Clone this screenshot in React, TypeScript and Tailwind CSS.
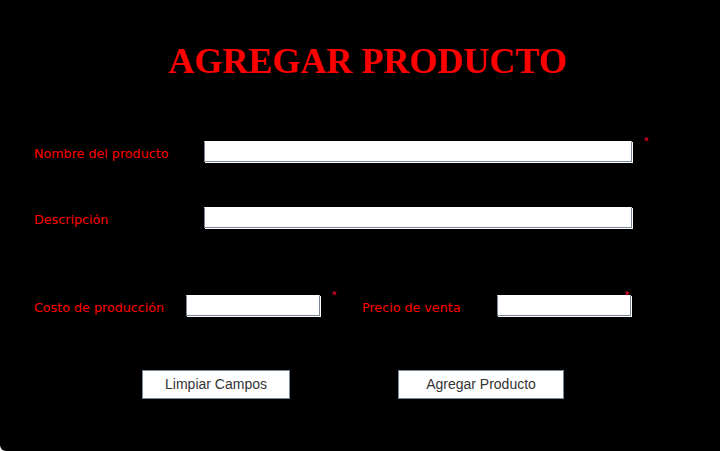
import React from 'react';

const Star = ({ className }: { className: string }) => (
  <span className={`absolute text-[11px] leading-[11px] font-bold text-[#d4002a] font-['Liberation_Sans'] ${className}`}>*</span>
);

const inputCls =
  "block h-[21px] bg-white border border-[#7b8794] border-t-white shadow-[1px_1px_0_#ffffff] outline-none";

const labelCls = "translate-y-[2px] text-[12.7px] leading-[15px] text-[#ff0000]";

const App = () => {
  return (
    <div className="min-h-[451px] bg-black rounded-bl-[6px] font-['DejaVu_Sans',sans-serif]">
      <h1 className="pt-[41px] pl-[15px] text-center text-[36px] leading-[41px] font-bold text-[#ff0000] font-['Liberation_Serif',serif]">
        AGREGAR PRODUCTO
      </h1>

      <div className="mt-[59px] pl-[34px]">
        <div className="flex items-center">
          <label className={`w-[170px] ${labelCls}`}>Nombre del producto</label>
          <div className="relative">
            <input className={`${inputCls} w-[428px]`} />
            <Star className="left-full ml-[12px] -top-[5px]" />
          </div>
        </div>

        <div className="mt-[45px] flex items-center">
          <label className={`w-[170px] ${labelCls}`}>Descripción</label>
          <input className={`${inputCls} w-[428px]`} />
        </div>

        <div className="mt-[67px] flex items-center">
          <label className={`w-[152px] ${labelCls}`}>Costo de producción</label>
          <div className="relative">
            <input className={`${inputCls} w-[134px]`} />
            <Star className="left-full ml-[12px] -top-[5px]" />
          </div>
          <label className={`ml-[42px] w-[135px] ${labelCls}`}>Precio de venta</label>
          <div className="relative">
            <input className={`${inputCls} w-[134px]`} />
            <Star className="right-[2px] -top-[5px]" />
          </div>
        </div>

        <div className="mt-[54px] ml-[108px] flex gap-[108px] font-['Liberation_Sans',sans-serif]">
          <button className="w-[148px] h-[29px] bg-white border border-[#7a8794] text-[14px] text-[#333333]">
            Limpiar Campos
          </button>
          <button className="w-[166px] h-[29px] bg-white border border-[#7a8794] text-[14px] text-[#333333]">
            Agregar Producto
          </button>
        </div>
      </div>
    </div>
  );
};

export default App;
